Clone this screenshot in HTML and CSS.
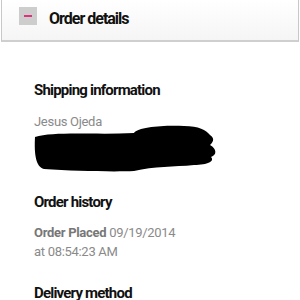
FILE: index.html
```html
<html>
<head>
<title>Order details</title>
<link rel="stylesheet" href="styles.css">
</head>
<body>
<div class="header">
<span class="icon"><span class="minus"></span></span>
<span class="title">Order details</span>
</div>

<div class="section ship">
<div class="heading">Shipping information</div>
<div class="line">Jesus Ojeda</div>
<svg class="scribble" width="184" height="48" viewBox="0 0 184 48">
<path d="M1 12 C20 6 60 10 100 8 C104 2 130 0 150 1 C165 1 172 5 176 10 C182 14 178 18 176 20 C183 24 183 30 177 32 C181 36 174 40 160 40 C140 42 120 41 100 46 C80 47 40 46 10 44 C2 42 0 30 1 12 Z" fill="#000"/>
</svg>
</div>

<div class="section history">
<div class="heading">Order history</div>
<div class="line"><b>Order Placed</b> 09/19/2014</div>
<div class="line">at 08:54:23 AM</div>
</div>

<div class="section delivery">
<div class="heading">Delivery method</div>
</div>
</body>
</html>
```

FILE: styles.css
```css
body {
margin: 0;
background: #fff;
font-family: Roboto, "Noto Sans", sans-serif;
overflow: hidden;
}

.header {
height: 33px;
margin: 0 1px;
padding: 7px 0 0 17px;
border: 1px solid #c8c8c8;
border-top: none;
border-bottom: 2px solid #cfcfcf;
background: linear-gradient(#fff, #f5f5f5);
display: flex;
align-items: flex-start;
}

.icon {
width: 18px;
height: 18px;
background: #cdcdcd;
display: flex;
align-items: center;
justify-content: center;
}

.minus {
width: 8px;
height: 2px;
background: #e0317e;
}

.title {
margin-left: 12px;
margin-top: 3px;
font-weight: bold;
font-size: 16px;
line-height: 18px;
letter-spacing: -1px;
color: #111;
}

.section {
padding-left: 34px;
}

.ship {
padding-top: 38px;
}

.history {
padding-top: 19px;
}

.delivery {
padding-top: 22px;
}

.heading {
font-weight: bold;
font-size: 15px;
line-height: 20px;
letter-spacing: -0.8px;
color: #111;
margin-bottom: 11px;
}

.ship .heading {
margin-bottom: 12px;
}

.line {
font-size: 13px;
line-height: 19px;
letter-spacing: -0.3px;
color: #8a8a8a;
}

.line b {
color: #777;
}

.scribble {
display: block;
margin-top: -6px;
}
```
